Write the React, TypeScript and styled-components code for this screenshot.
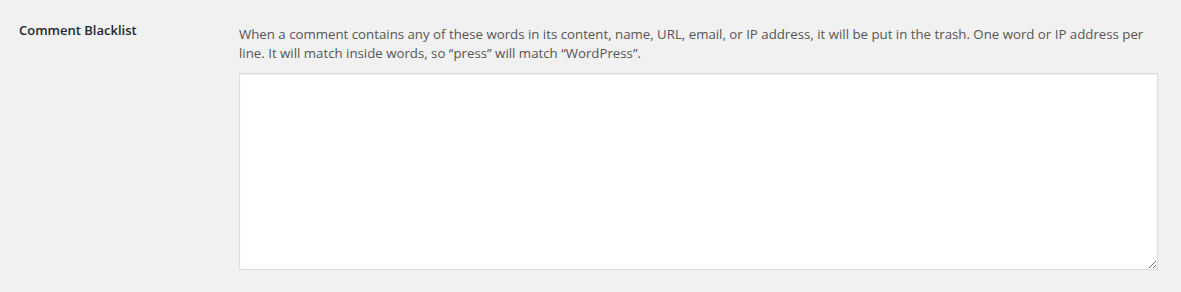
import styled, { createGlobalStyle } from "styled-components";

const Global = createGlobalStyle`
  html, body {
    margin: 0;
    padding: 0;
    background: #f1f1f1;
  }
  body {
    font-family: "Open Sans", "Noto Sans", sans-serif;
    color: #444;
  }
`;

const Row = styled.div`
  display: grid;
  grid-template-columns: 220px 919px;
  padding: 0 0 0 19px;
`;

const Label = styled.div`
  padding-top: 22px;
  font-size: 13px;
  font-weight: 600;
  line-height: 1.3;
  color: #23282d;
`;

const Field = styled.div`
  padding-top: 25px;
`;

const Description = styled.p`
  margin: 0 0 10px;
  font-size: 13.25px;
  line-height: 19px;
  color: #555;
`;

const Box = styled.textarea`
  display: block;
  box-sizing: border-box;
  width: 919px;
  height: 197px;
  margin: 0;
  border: 1px solid #ddd;
  background: #fff;
  box-shadow: inset 0 1px 2px rgba(0, 0, 0, 0.07);
  resize: vertical;
  outline: none;
`;

const App = () => {
  return (
    <>
      <Global />
      <Row>
        <Label>Comment Blacklist</Label>
        <Field>
          <Description>
            When a comment contains any of these words in its content, name, URL, email, or IP
            address, it will be put in the trash. One word or IP address per line. It will match
            inside words, so “press” will match “WordPress”.
          </Description>
          <Box />
        </Field>
      </Row>
    </>
  );
};

export default App;
